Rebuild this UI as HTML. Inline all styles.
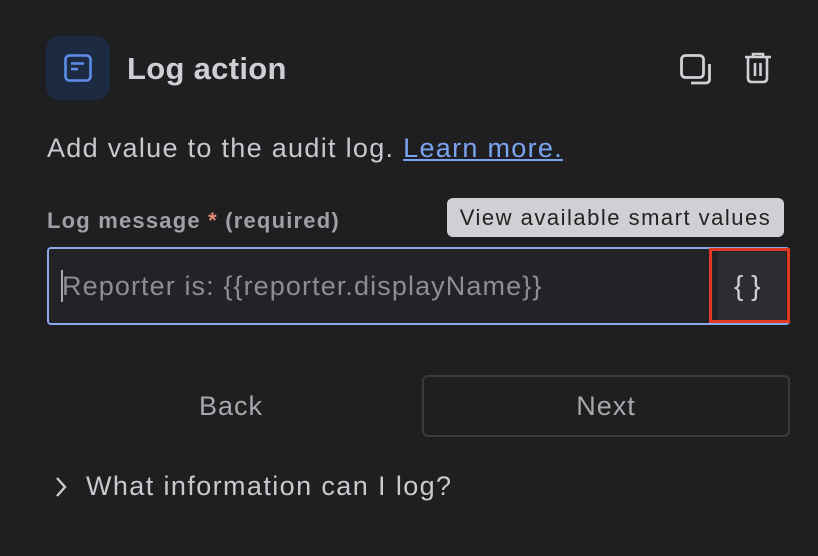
<!DOCTYPE html>
<html><head><style>
body{margin:0;width:818px;height:556px;background:#1f1f21;font-family:"Liberation Sans",sans-serif;position:relative;overflow:hidden}
.a{position:absolute;white-space:nowrap}
</style></head><body>
<div class="a" style="left:46px;top:36px;width:64px;height:64px;border-radius:14px;background:#1c2b42"></div>
<svg class="a" style="left:62px;top:52px" width="32" height="32" viewBox="0 0 32 32"><rect x="3.5" y="3.5" width="25" height="25" rx="4" fill="none" stroke="#5b8ee8" stroke-width="2.6"/><path d="M9 11.5H22M9 17H16" stroke="#5b8ee8" stroke-width="2.6"/></svg>
<div class="a" style="left:127px;top:51px;font-size:31px;font-weight:bold;color:#cecfd2;letter-spacing:0.3px">Log action</div>
<svg class="a" style="left:676px;top:50px" width="40" height="40" viewBox="0 0 40 40"><rect x="5.5" y="5.5" width="22" height="22" rx="4" fill="none" stroke="#cfd0d3" stroke-width="2.8"/><path d="M33.5 14V29q0 4-4 4H15" fill="none" stroke="#cfd0d3" stroke-width="2.8"/></svg>
<svg class="a" style="left:740px;top:50px" width="36" height="38" viewBox="0 0 36 38"><path d="M5 7H31M13 7V4H23V7M8 7V28q0 4 4 4H23q4 0 4-4V7" fill="none" stroke="#cfd0d3" stroke-width="2.6"/><path d="M15 13V26M20.5 13V26" stroke="#cfd0d3" stroke-width="2.6"/></svg>
<div class="a" style="left:47px;top:133px;font-size:27px;color:#c7c9cc;letter-spacing:1.3px">Add value to the audit log. <span style="color:#7ba4f0;text-decoration:underline">Learn more.</span></div>
<div class="a" style="left:47px;top:208px;font-size:22px;font-weight:bold;color:#9fa1a5;letter-spacing:1.2px">Log message <span style="color:#e8877a">*</span> (required)</div>
<div class="a" style="left:447px;top:198px;width:337px;height:39px;border-radius:6px;background:#cfd0d3;color:#222;font-size:22px;line-height:39px;text-align:center;letter-spacing:1.5px">View available smart values</div>
<div class="a" style="left:47px;top:247px;width:739px;height:74px;border:2px solid #8aa9ea;border-radius:4px;background:#222326"></div>
<div class="a" style="left:61px;top:270px;width:2px;height:32px;background:#aaa"></div>
<div class="a" style="left:62px;top:271px;font-size:27px;color:#8c8e92;letter-spacing:1.1px">Reporter is: {{reporter.displayName}}</div>
<div class="a" style="left:718px;top:252px;width:68px;height:68px;background:#2c2d31"></div>
<div class="a" style="left:709px;top:248px;width:75px;height:69px;border:3px solid #e23a22"></div>
<div class="a" style="left:734px;top:270px;font-size:28px;color:#cfd0d3">{ }</div>
<div class="a" style="left:40px;top:391px;width:382px;text-align:center;font-size:27px;color:#a6a8ab;letter-spacing:1px">Back</div>
<div class="a" style="left:422px;top:375px;width:364px;height:58px;border:2px solid #3a3b3e;border-radius:6px;text-align:center;line-height:58px;font-size:27px;color:#a6a8ab;letter-spacing:1px">Next</div>
<svg class="a" style="left:52px;top:475px" width="18" height="24" viewBox="0 0 18 24"><path d="M5 3L13 12L5 21" fill="none" stroke="#c9cacd" stroke-width="2.4"/></svg>
<div class="a" style="left:86px;top:471px;font-size:27px;color:#c9cacd;letter-spacing:1.4px">What information can I log?</div>
</body></html>
